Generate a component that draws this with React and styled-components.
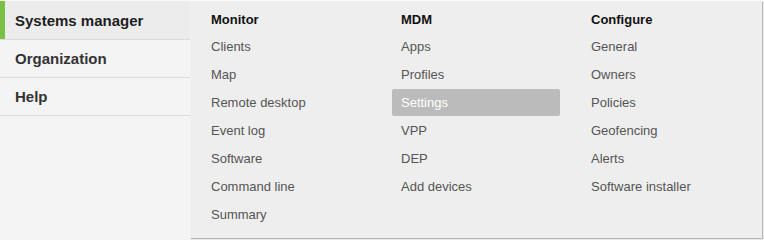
import React from "react";
import styled, { createGlobalStyle } from "styled-components";

const GlobalStyle = createGlobalStyle`
  html, body {
    margin: 0;
    padding: 0;
    background: #ffffff;
  }
  body {
    font-family: "Liberation Sans", Arial, sans-serif;
  }
`;

const columns = [
  {
    title: "Monitor",
    items: ["Clients", "Map", "Remote desktop", "Event log", "Software", "Command line", "Summary"],
  },
  {
    title: "MDM",
    items: ["Apps", "Profiles", "Settings", "VPP", "DEP", "Add devices"],
  },
  {
    title: "Configure",
    items: ["General", "Owners", "Policies", "Geofencing", "Alerts", "Software installer"],
  },
];

const sections = ["Systems manager", "Organization", "Help"];

const App = () => {
  return (
    <Page>
      <GlobalStyle />
      <Sidebar>
        {sections.map((s, i) => (
          <NavRow key={s} active={i === 0} first={i === 0}>
            {s}
          </NavRow>
        ))}
      </Sidebar>
      <Menu>
        {columns.map((col) => (
          <Column key={col.title}>
            <Heading>{col.title}</Heading>
            {col.items.map((item) => (
              <Item key={item} selected={item === "Settings"}>
                {item}
              </Item>
            ))}
          </Column>
        ))}
      </Menu>
    </Page>
  );
};

export default App;

const Page = styled.div`
  display: flex;
  align-items: flex-start;
  width: 764px;
  height: 240px;
  overflow: hidden;
  border-top: 1px solid #f9f9f9;
  box-sizing: border-box;
  background: #f4f4f4;
`;

const Sidebar = styled.nav`
  width: 190px;
  flex: none;
  display: flex;
  flex-direction: column;
  background: #f4f4f4;
  align-self: stretch;
`;

const NavRow = styled.div`
  height: ${(p) => (p.first ? "38px" : "37px")};
  display: flex;
  align-items: center;
  padding-left: 15px;
  border-bottom: 1px solid #dcdcdc;
  box-shadow: ${(p) => (p.active ? "inset 5px 0 0 #7ac143" : "none")};
  background: ${(p) => (p.active ? "#ececec" : "#f4f4f4")};
  color: ${(p) => (p.active ? "#1e1e1e" : "#333333")};
  font-size: 15px;
  font-weight: bold;
`;

const Menu = styled.div`
  width: 572px;
  height: 237px;
  flex: none;
  box-sizing: border-box;
  display: grid;
  grid-template-columns: 168px 168px 168px;
  column-gap: 22px;
  padding: 4px 0 10px 12px;
  background: #eeeeee;
  box-shadow: 1px 1px 1px rgba(0, 0, 0, 0.25);
`;

const Column = styled.div`
  display: flex;
  flex-direction: column;
`;

const Heading = styled.div`
  height: 27px;
  padding-top: 1px;
  line-height: 27px;
  padding-left: 9px;
  font-size: 13px;
  font-weight: bold;
  color: #111111;
`;

const Item = styled.div`
  height: 27px;
  line-height: 27px;
  margin-bottom: 1px;
  padding-left: 9px;
  font-size: 13px;
  border-radius: 2px;
  color: ${(p) => (p.selected ? "#ffffff" : "#555555")};
  background: ${(p) => (p.selected ? "#bbbbbb" : "transparent")};
`;
